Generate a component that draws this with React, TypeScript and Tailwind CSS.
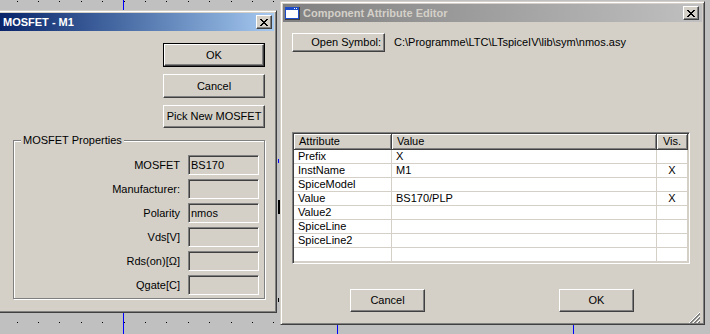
import type { ReactNode } from 'react';

const dots: [number, number][] = [];
for (let i = 0; i < 34; i++) {
  for (let j = 0; j < 16; j++) {
    dots.push([Math.round(16.5 + 21.4 * i), Math.round(1 + 21.4 * j)]);
  }
}

const attrs = [
  { name: 'Prefix', value: 'X', vis: '' },
  { name: 'InstName', value: 'M1', vis: 'X' },
  { name: 'SpiceModel', value: '', vis: '' },
  { name: 'Value', value: 'BS170/PLP', vis: 'X' },
  { name: 'Value2', value: '', vis: '' },
  { name: 'SpiceLine', value: '', vis: '' },
  { name: 'SpiceLine2', value: '', vis: '' },
  { name: '', value: '', vis: '' },
];

const props = [
  { label: 'MOSFET', value: 'BS170' },
  { label: 'Manufacturer:', value: '' },
  { label: 'Polarity', value: 'nmos' },
  { label: 'Vds[V]', value: '' },
  { label: 'Rds(on)[Ω]', value: '' },
  { label: 'Qgate[C]', value: '' },
];

function CloseBtn() {
  return (
    <div className="flex h-[14px] w-[16px] items-center justify-center border border-t-white border-l-white border-r-[#404040] border-b-[#404040] bg-[#d4d0c8] shadow-[inset_-1px_-1px_0_#808080]">
      <svg width="8" height="7" viewBox="0 0 8 7" shapeRendering="crispEdges">
        <path
          d="M0 0h2v1H0zM6 0h2v1H6zM1 1h2v1H1zM5 1h2v1H5zM2 2h4v1H2zM3 3h2v1H3zM2 4h4v1H2zM1 5h2v1H1zM5 5h2v1H5zM0 6h2v1H0zM6 6h2v1H6z"
          fill="#000"
        />
      </svg>
    </div>
  );
}

function Bevel({ children, className = '' }: { children: ReactNode; className?: string }) {
  return (
    <div
      className={`flex h-full w-full items-center border border-t-white border-l-white border-r-[#404040] border-b-[#404040] bg-[#d4d0c8] shadow-[inset_-1px_-1px_0_#808080] ${className}`}
    >
      {children}
    </div>
  );
}

function WinIcon() {
  return (
    <svg width="15" height="13" viewBox="0 0 15 13" shapeRendering="crispEdges">
      <rect x="0" y="0" width="15" height="13" fill="#404040" />
      <rect x="0" y="0" width="14" height="12" fill="#1c4cc8" />
      <rect x="1" y="3" width="12" height="8" fill="#fff" />
      <rect x="11" y="1" width="1" height="1" fill="#fff" />
      <rect x="9" y="1" width="1" height="1" fill="#fff" />
    </svg>
  );
}

function Grip() {
  return (
    <svg width="12" height="12" viewBox="0 0 12 12" shapeRendering="crispEdges">
      <path d="M11 0L0 11M11 4L4 11M11 8L8 11" stroke="#fff" strokeWidth="1" />
      <path d="M11 1L1 11M11 2L2 11M11 5L5 11M11 6L6 11M11 9L9 11M11 10L10 11" stroke="#808080" strokeWidth="1" />
    </svg>
  );
}

export default function App() {
  return (
    <div className="relative h-[334px] w-[710px] overflow-hidden bg-[#c0c0c0] font-['Liberation_Sans',Arial,sans-serif] text-[11px] leading-[13px] text-black">
      <svg className="absolute inset-0" width="710" height="334" shapeRendering="crispEdges">
        {dots.map(([x, y]) => (
          <rect key={`${x}-${y}`} x={x} y={y} width="1" height="1" fill="#000" />
        ))}
        <rect x="123" y="0" width="1" height="334" fill="#0000ff" />
        <rect x="337" y="300" width="1" height="34" fill="#0000ff" />
        <rect x="573" y="300" width="1" height="34" fill="#0000ff" />
        <rect x="278" y="159" width="1" height="4" fill="#0000ff" />
        <rect x="278" y="200" width="2" height="14" fill="#000" />
        <rect x="278" y="298" width="1" height="4" fill="#000" />
      </svg>

      {/* MOSFET dialog */}
      <div className="absolute left-[-3px] top-[10px] flex h-[303px] w-[280px] flex-col border border-t-[#d4d0c8] border-l-[#d4d0c8] border-r-[#404040] border-b-[#404040] bg-[#d4d0c8] p-[2px] shadow-[inset_1px_1px_0_#fff,inset_-1px_-1px_0_#808080]">
        <div className="flex h-[18px] shrink-0 items-center justify-between bg-linear-to-r from-[#0a246a] to-[#a6caf0] pl-[3px] pr-[2px]">
          <span className="text-[11px] font-bold text-white">MOSFET - M1</span>
          <CloseBtn />
        </div>

        <div className="mt-[12px] flex flex-col items-end gap-[7px] pr-[9px]">
          <div className="h-[24px] w-[102px] border border-black">
            <Bevel className="justify-center">OK</Bevel>
          </div>
          <div className="h-[24px] w-[102px]">
            <Bevel className="justify-center">Cancel</Bevel>
          </div>
          <div className="h-[23px] w-[102px]">
            <Bevel className="justify-center">Pick New MOSFET</Bevel>
          </div>
        </div>

        <fieldset className="ml-[13px] mt-[6px] w-[252px] border border-[#808080] px-0 pb-[3px] shadow-[1px_1px_0_#fff,inset_1px_1px_0_#fff]">
          <legend className="ml-[7px] bg-[#d4d0c8] px-[2px] leading-[13px]">MOSFET Properties</legend>
          <div className="mt-[8px] flex flex-col gap-[4px] pr-[5px]">
            {props.map((p) => (
              <div key={p.label} className="flex items-center justify-end gap-[8px]">
                <span>{p.label}</span>
                <div className="flex h-[20px] w-[71px] items-center border border-t-[#808080] border-l-[#808080] border-r-white border-b-white pl-[2px] shadow-[inset_1px_1px_0_#404040,inset_-1px_-1px_0_#d4d0c8]">
                  {p.value}
                </div>
              </div>
            ))}
          </div>
        </fieldset>
      </div>

      {/* Component Attribute Editor */}
      <div className="absolute left-[280px] top-[1px] flex h-[324px] w-[425px] flex-col border border-t-[#d4d0c8] border-l-[#d4d0c8] border-r-[#404040] border-b-[#404040] bg-[#d4d0c8] p-[2px] shadow-[inset_1px_1px_0_#fff,inset_-1px_-1px_0_#808080]">
        <div className="flex h-[18px] shrink-0 items-center bg-linear-to-r from-[#808080] to-[#c0c0c0] pl-[2px] pr-[3px]">
          <WinIcon />
          <span className="ml-[3px] flex-1 text-[11px] font-bold text-[#d4d0c8]">Component Attribute Editor</span>
          <CloseBtn />
        </div>

        <div className="ml-[9px] mt-[11px] flex items-center">
          <div className="h-[19px] w-[93px]">
            <Bevel className="justify-end pr-[3px]">Open Symbol:</Bevel>
          </div>
          <span className="ml-[9px]">C:\Programme\LTC\LTspiceIV\lib\sym\nmos.asy</span>
        </div>

        <div className="ml-[9px] mt-[80px] w-[398px] border border-t-[#808080] border-l-[#808080] border-r-white border-b-white shadow-[inset_1px_1px_0_#404040,inset_-1px_-1px_0_#d4d0c8] p-px">
          <div className="flex h-[16px]">
            <div className="flex w-[98px] items-center border-r border-b border-r-[#404040] border-b-[#404040] bg-[#d4d0c8] pl-[5px] shadow-[inset_1px_1px_0_#fff,inset_-1px_-1px_0_#808080]">
              Attribute
            </div>
            <div className="flex w-[265px] items-center border-r border-b border-r-[#404040] border-b-[#404040] bg-[#d4d0c8] pl-[5px] shadow-[inset_1px_1px_0_#fff,inset_-1px_-1px_0_#808080]">
              Value
            </div>
            <div className="flex w-[31px] items-center justify-center border-r border-b border-r-[#404040] border-b-[#404040] bg-[#d4d0c8] shadow-[inset_1px_1px_0_#fff,inset_-1px_-1px_0_#808080]">
              Vis.
            </div>
          </div>
          {attrs.map((a, i) => (
            <div key={i} className="flex h-[14px] bg-white">
              <div className="w-[98px] border-r border-b border-[#d4d0c8] pl-[4px]">{a.name}</div>
              <div className="w-[265px] border-r border-b border-[#d4d0c8] pl-[4px]">{a.value}</div>
              <div className="w-[31px] border-r border-b border-[#d4d0c8] text-center">{a.vis}</div>
            </div>
          ))}
        </div>

        <div className="ml-[67px] mt-[25px] flex gap-[134px]">
          <div className="h-[23px] w-[75px]">
            <Bevel className="justify-center">Cancel</Bevel>
          </div>
          <div className="h-[23px] w-[75px]">
            <Bevel className="justify-center">OK</Bevel>
          </div>
        </div>

        <div className="mt-auto flex justify-end pb-px pr-px">
          <Grip />
        </div>
      </div>
    </div>
  );
}
